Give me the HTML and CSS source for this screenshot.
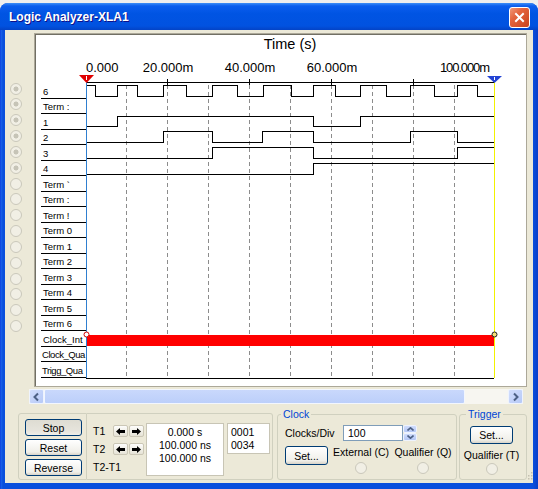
FILE: index.html
```html
<!DOCTYPE html>
<html lang="en">
  <head>
    <meta charset="UTF-8">
    <meta name="viewport" content="width=device-width, initial-scale=1">
    <title>Logic Analyzer-XLA1</title>
    <link rel="stylesheet" href="styles.css">
  </head>
  <body>
    <div class="window">
      <div class="titlebar">
        <span class="title">Logic Analyzer-XLA1</span>
        <button class="close" name="close">
          <svg width="13" height="13" viewBox="0 0 13 13"><path d="M3 3L10 10M10 3L3 10" stroke="#fff" stroke-width="2" stroke-linecap="square"/></svg>
        </button>
      </div>
      <div class="client">
        <div class="main">
          <div class="radios">
            <span class="radio on"></span>
            <span class="radio on"></span>
            <span class="radio on"></span>
            <span class="radio on"></span>
            <span class="radio on"></span>
            <span class="radio on"></span>
            <span class="radio"></span>
            <span class="radio"></span>
            <span class="radio"></span>
            <span class="radio"></span>
            <span class="radio"></span>
            <span class="radio"></span>
            <span class="radio"></span>
            <span class="radio"></span>
            <span class="radio"></span>
            <span class="radio"></span>
          </div>
          <div class="panel">
            <div class="axis-title">Time (s)</div>
            <div class="chart">
              <div class="labels">
                <div class="label">6</div>
                <div class="label">Term :</div>
                <div class="label">1</div>
                <div class="label">2</div>
                <div class="label">3</div>
                <div class="label">4</div>
                <div class="label">Term `</div>
                <div class="label">Term :</div>
                <div class="label">Term !</div>
                <div class="label">Term 0</div>
                <div class="label">Term 1</div>
                <div class="label">Term 2</div>
                <div class="label">Term 3</div>
                <div class="label">Term 4</div>
                <div class="label">Term 5</div>
                <div class="label">Term 6</div>
                <div class="label">Clock_Int</div>
                <div class="label tight">Clock_Qua</div>
                <div class="label tight">Trigg_Qua</div>
              </div>
              <svg class="waves" width="438" height="322" viewBox="0 0 438 322">
                <!-- dashed division lines -->
                <path class="grid" d="M40.5 27V320M81.5 27V320M122.5 27V320M163.5 27V320M204.5 27V320M245.5 27V320M286.5 27V320M327.5 27V320M368.5 27V320"/>
                <!-- time axis -->
                <path class="line" d="M0 24.5H408M81.5 21V27M163.5 21V27M245.5 21V27M327.5 21V27"/>
                <text class="tick" x="0" y="14">0.000</text>
                <text class="tick" x="82" y="14" text-anchor="middle">20.000m</text>
                <text class="tick" x="164" y="14" text-anchor="middle">40.000m</text>
                <text class="tick" x="246" y="14" text-anchor="middle">60.000m</text>
                <text class="tick" x="404" y="14" text-anchor="end" textLength="50">100.000m</text>
                <!-- signals -->
                <path class="line" d="M0 27.5H9V38.5H31V27.5H51V38.5H77V27.5H100V38.5H126V27.5H151V38.5H177V27.5H205V38.5H227V27.5H249V38.5H274V27.5H300V38.5H324V27.5H348V38.5H371V27.5H391V38.5H408"/>
                <path class="line" d="M0 68.5H31V58.5H227V68.5H274V58.5H408"/>
                <path class="line" d="M0 84.5H77V73.5H126V84.5H176V73.5H227V84.5H324V73.5H371V84.5H408"/>
                <path class="line" d="M0 100.5H126V89.5H227V100.5H371V89.5H408"/>
                <path class="line" d="M0 116.5H227V105.5H408"/>
                <rect x="0" y="277" width="408" height="11" fill="#ff0000"/>
                <path class="line" d="M0 320.5H408"/>
                <!-- cursors -->
                <path d="M0.5 21V320" stroke="#2f7fd0" stroke-width="1"/>
                <path d="M408.5 24V320" stroke="#f2f200" stroke-width="1"/>
                <polygon points="-7,17 8,17 0.5,25" fill="#e00000"/>
                <path d="M0.5 18V22" stroke="#fff" stroke-width="1"/>
                <polygon points="401,18 416,18 408.5,25" fill="#2444d4"/>
                <path d="M408.5 19V22" stroke="#fff" stroke-width="1"/>
                <circle cx="0.5" cy="276.5" r="2.5" fill="#fff" stroke="#d40000" stroke-width="1"/>
                <circle cx="408.5" cy="276.5" r="2.5" fill="#f4e07a" stroke="#222" stroke-width="1"/>
              </svg>
            </div>
          </div>
        </div>
        <div class="hscroll">
          <span class="sb-btn">
            <svg width="9" height="10" viewBox="0 0 9 10"><polyline points="6,1.5 2.5,5 6,8.5" fill="none" stroke="#4d6185" stroke-width="2"/></svg>
          </span>
          <span class="sb-thumb"></span>
          <span class="sb-track"></span>
          <span class="sb-btn">
            <svg width="9" height="10" viewBox="0 0 9 10"><polyline points="3,1.5 6.5,5 3,8.5" fill="none" stroke="#4d6185" stroke-width="2"/></svg>
          </span>
        </div>
        <div class="controls">
          <div class="group-a">
            <button class="btn pressed" name="stop">Stop</button>
            <button class="btn" name="reset">Reset</button>
            <button class="btn" name="reverse">Reverse</button>
          </div>
          <div class="group-b">
            <span class="tname">T1</span>
            <span class="arrows">
              <button class="arrow-btn"><svg width="9" height="7" viewBox="0 0 9 7"><path d="M0 3.5L4 0V2H9V5H4V7Z"/></svg></button>
              <button class="arrow-btn"><svg width="9" height="7" viewBox="0 0 9 7"><path d="M9 3.5L5 0V2H0V5H5V7Z"/></svg></button>
            </span>
            <div class="value-box">0.000 s<br>100.000 ns<br>100.000 ns</div>
            <div class="count-box">0001<br>0034</div>
            <span class="tname">T2</span>
            <span class="arrows">
              <button class="arrow-btn"><svg width="9" height="7" viewBox="0 0 9 7"><path d="M0 3.5L4 0V2H9V5H4V7Z"/></svg></button>
              <button class="arrow-btn"><svg width="9" height="7" viewBox="0 0 9 7"><path d="M9 3.5L5 0V2H0V5H5V7Z"/></svg></button>
            </span>
            <span class="tname">T2-T1</span>
          </div>
          <fieldset class="clock">
            <legend>Clock</legend>
            <div class="clock-body">
              <div class="row">
                <span class="clocks-label">Clocks/Div</span>
                <span class="text-input">100</span>
                <span class="spinner">
                  <span class="spin-btn"><svg width="7" height="4" viewBox="0 0 7 4"><polyline points="0.5,3.5 3.5,0.8 6.5,3.5" fill="none" stroke="#4d6185" stroke-width="1.6"/></svg></span>
                  <span class="spin-btn"><svg width="7" height="4" viewBox="0 0 7 4"><polyline points="0.5,0.5 3.5,3.2 6.5,0.5" fill="none" stroke="#4d6185" stroke-width="1.6"/></svg></span>
                </span>
              </div>
              <div class="row row2">
                <button class="btn set-btn" name="clock-set">Set...</button>
                <div class="option">
                  <span class="option-label">External (C)</span>
                  <span class="radio-sm"></span>
                </div>
                <div class="option qual">
                  <span class="option-label">Qualifier (Q)</span>
                  <span class="radio-sm"></span>
                </div>
              </div>
            </div>
          </fieldset>
          <fieldset class="trigger">
            <legend>Trigger</legend>
            <div class="trigger-body">
              <button class="btn set-btn short" name="trigger-set">Set...</button>
              <span class="option-label trig-label">Qualifier (T)</span>
              <span class="radio-sm trig-radio"></span>
            </div>
          </fieldset>
          <svg class="grip" width="6" height="9" viewBox="0 0 6 9">
            <rect x="4" y="1" width="1.5" height="1.5" fill="#c3c0b0"/>
            <rect x="1" y="4" width="1.5" height="1.5" fill="#c3c0b0"/>
            <rect x="4" y="4" width="1.5" height="1.5" fill="#c3c0b0"/>
            <rect x="1" y="7" width="1.5" height="1.5" fill="#c3c0b0"/>
            <rect x="4" y="7" width="1.5" height="1.5" fill="#c3c0b0"/>
          </svg>
        </div>
      </div>
    </div>
  </body>
</html>
```

FILE: styles.css
```css
html, body {
  margin: 0;
  background-color: #eeeeee;
  font-family: "Liberation Sans", Arial, sans-serif;
}

.window {
  box-sizing: border-box;
  width: 538px;
  height: 486px;
  margin-top: 3px;
  padding-bottom: 6px;
  background: linear-gradient(to right, #0831d9 0, #1a62ea 1px, #0a4fdd 3px, #0a4fdd 533px, #0a3fc8 538px);
  border-radius: 8px 8px 0 0;
  display: flex;
  flex-direction: column;
}

.titlebar {
  height: 27px;
  flex: none;
  display: flex;
  align-items: center;
  padding: 0 8px 0 9px;
  border-radius: 8px 8px 0 0;
  background: linear-gradient(#3d8ef7 0, #0a5ded 3px, #0054e3 40%, #0152e0 85%, #0343c6 100%);
}

.title {
  flex: 1;
  color: white;
  font-weight: bold;
  font-size: 12px;
  text-shadow: 1px 1px #0f1089;
}

.close {
  width: 21px;
  height: 21px;
  margin-top: 2px;
  padding: 0;
  box-sizing: border-box;
  border: 1px solid #fff;
  border-radius: 3px;
  background: linear-gradient(135deg, #f09878 0%, #e4643d 35%, #c9431d 100%);
  display: flex;
  align-items: center;
  justify-content: center;
}

.client {
  flex: 1;
  margin: 0 5px;
  background-color: #ece9d8;
  display: flex;
  flex-direction: column;
}

.main {
  display: flex;
  margin-top: 3px;
  height: 354px;
}

.radios {
  box-sizing: border-box;
  width: 29px;
  padding-top: 49.5px;
}

.radio, .radio-sm {
  display: block;
  box-sizing: border-box;
  width: 12px;
  height: 12px;
  border-radius: 50%;
  border: 1px solid #cac8bb;
  background-color: #f1efe5;
}

.radio {
  margin: 0 0 3.85px 5px;
}

.radio.on {
  background: radial-gradient(circle, #c6c4b7 0, #c6c4b7 2.2px, #f1efe5 2.8px);
}

.panel {
  box-sizing: border-box;
  width: 493px;
  height: 354px;
  border: 1px solid #aca899;
  box-shadow: inset 1px 1px 0 #716f64;
  background-color: white;
  display: flex;
  flex-direction: column;
}

.axis-title {
  box-sizing: border-box;
  margin-left: 51px;
  width: 408px;
  height: 24px;
  padding-top: 2px;
  text-align: center;
  font-size: 14.5px;
  line-height: 17px;
}

.chart {
  display: flex;
  margin-left: 6px;
}

.labels {
  flex: none;
  width: 45px;
  padding-top: 25px;
}

.label {
  box-sizing: border-box;
  height: 15.52px;
  border-bottom: 1px solid #000;
  padding: 1.5px 0 0 2px;
  font-size: 9.5px;
  line-height: 13px;
  white-space: nowrap;
  overflow: hidden;
}

.label.tight {
  padding-left: 1px;
  letter-spacing: -0.45px;
}

.waves {
  flex: none;
  display: block;
  overflow: visible;
}

.waves .grid {
  stroke: #8c8c8c;
  stroke-width: 1;
  stroke-dasharray: 4 3;
  fill: none;
}

.waves .line {
  stroke: #000;
  stroke-width: 1;
  fill: none;
  shape-rendering: crispEdges;
}

.waves .tick {
  font-family: "Liberation Sans", Arial, sans-serif;
  font-size: 13px;
  fill: #000;
}

/* scroll bar */
.hscroll {
  display: flex;
  width: 494px;
  height: 15px;
  margin: 2px 0 0 24px;
  background-color: #f7f6f1;
}

.sb-btn {
  box-sizing: border-box;
  width: 15px;
  height: 15px;
  border: 1px solid #eef3fe;
  border-radius: 2px;
  background: linear-gradient(135deg, #d2defc, #b6c9f7);
  display: flex;
  align-items: center;
  justify-content: center;
}

.sb-thumb {
  box-sizing: border-box;
  width: 421px;
  border: 1px solid #f2f6fe;
  border-radius: 2px;
  background: linear-gradient(#c9d8fc, #bccffa);
}

.sb-track {
  flex: 1;
}

/* bottom controls */
.controls {
  display: flex;
  align-items: flex-start;
  margin: 3px 0 0 13px;
  height: 73px;
  font-size: 10.5px;
}

.group-a {
  box-sizing: border-box;
  width: 69px;
  height: 67px;
  margin-top: 6px;
  border: 1px solid #d0d0bf;
  border-radius: 3px 0 0 3px;
  padding: 5px 0 0 6px;
  display: flex;
  flex-direction: column;
  gap: 3px;
}

.btn {
  box-sizing: border-box;
  width: 57px;
  height: 17px;
  padding: 0;
  border: 1px solid #003c74;
  border-radius: 3px;
  background: linear-gradient(#ffffff, #f0efe9 80%, #d8d3c8);
  font-family: "Liberation Sans", Arial, sans-serif;
  font-size: 10.5px;
  color: #000;
}

.btn.pressed {
  background: linear-gradient(#dedcd2, #e6e4dc 70%, #efeee8);
}

.group-b {
  box-sizing: border-box;
  width: 186px;
  height: 67px;
  margin-top: 6px;
  border: 1px solid #d0d0bf;
  border-left: none;
  border-radius: 0 3px 3px 0;
  padding: 8px 0 0 6px;
  display: grid;
  grid-template-columns: 20px 33px 81px 43px;
  grid-template-rows: 18px 18px 18px;
  align-items: center;
}

.tname {
  white-space: nowrap;
}

.arrows {
  display: flex;
  gap: 1px;
}

.arrow-btn {
  box-sizing: border-box;
  width: 15px;
  height: 12px;
  padding: 0;
  border: 1px solid #cbc7b6;
  border-radius: 2px;
  background: linear-gradient(#fdfdfb, #e6e3d6);
  display: flex;
  align-items: center;
  justify-content: center;
}

.value-box {
  grid-row: span 3;
  align-self: start;
  box-sizing: border-box;
  width: 78px;
  height: 53px;
  margin-top: 1px;
  padding-top: 2px;
  border: 1px solid #c8c5b5;
  background-color: white;
  text-align: center;
  line-height: 13px;
}

.count-box {
  grid-row: span 2;
  align-self: start;
  box-sizing: border-box;
  width: 43px;
  height: 31px;
  margin-top: 1px;
  padding: 2px 0 0 3px;
  border: 1px solid #c8c5b5;
  background-color: white;
  line-height: 13px;
}

fieldset {
  box-sizing: border-box;
  height: 73px;
  min-width: 0;
  margin: 0;
  padding: 0;
  border: 1px solid #d0d0bf;
  border-radius: 3px;
}

legend {
  padding: 0 2px;
  margin-left: 3px;
  font-size: 10.5px;
  line-height: 14px;
  color: #0046d5;
}

.clock {
  width: 180px;
  margin-left: 4px;
}

.trigger {
  width: 68px;
  margin-left: 2px;
}

.trigger legend {
  margin-left: 6px;
}

.clock-body {
  padding: 4px 0 0 7px;
}

.row {
  display: flex;
  align-items: center;
}

.clocks-label {
  width: 58px;
}

.text-input {
  box-sizing: border-box;
  width: 60px;
  height: 16px;
  padding-left: 4px;
  border: 1px solid #7f9db9;
  background-color: white;
  line-height: 14px;
}

.spinner {
  width: 14px;
  height: 16px;
  display: flex;
  flex-direction: column;
}

.spin-btn {
  flex: 1;
  box-sizing: border-box;
  border: 1px solid #eef3fe;
  border-radius: 2px;
  background: linear-gradient(#d0dcfb, #b4c7f6);
  display: flex;
  align-items: center;
  justify-content: center;
}

.row2 {
  margin-top: 5px;
  align-items: flex-start;
}

.set-btn {
  width: 43px;
  height: 19px;
}

.set-btn.short {
  height: 18px;
}

.option {
  display: flex;
  flex-direction: column;
  align-items: center;
  margin-left: 5px;
}

.option-label {
  line-height: 13px;
  white-space: nowrap;
}

.option .radio-sm {
  margin-top: 3px;
}

.qual {
  width: 58px;
  overflow: hidden;
}

.trigger-body {
  display: flex;
  flex-direction: column;
  align-items: center;
  padding: 5px 3px 0 0;
}

.trig-label {
  margin-top: 4.5px;
}

.trig-radio {
  margin-top: 1.5px;
}

.grip {
  align-self: flex-end;
  flex: none;
}
```
